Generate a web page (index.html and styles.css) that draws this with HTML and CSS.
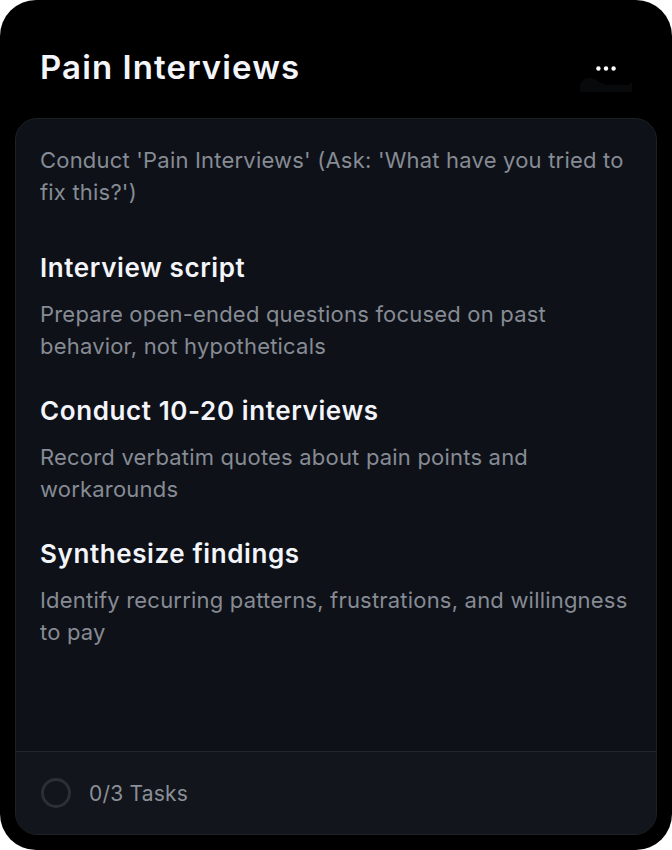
FILE: index.html
```html
<!DOCTYPE html>
<html>
<head>
<meta charset="utf-8">
<link rel="stylesheet" href="styles.css">
</head>
<body>
<div class="frame">
  <header class="header">
    <h1 class="title">Pain Interviews</h1>
    <button class="more" aria-label="More">
      <svg width="20" height="5" viewBox="0 0 20 5"><circle cx="2.4" cy="2.5" r="2.2" fill="#fff"/><circle cx="10" cy="2.5" r="2.2" fill="#fff"/><circle cx="17.6" cy="2.5" r="2.2" fill="#fff"/></svg>
      <svg class="ghost" width="52" height="14" viewBox="0 0 52 14"><path d="M0 14 L0 7 Q2 0 9 0 Q15 0 19 4 L26 7 L49 7 L52 4 L52 14 Z" fill="#08090a"/></svg>
    </button>
  </header>
  <section class="card">
    <div class="body">
      <p class="intro">Conduct 'Pain Interviews' (Ask: 'What have you tried to fix this?')</p>
      <div class="step">
        <h2 class="step-title">Interview script</h2>
        <p class="step-desc">Prepare open-ended questions focused on past behavior, not hypotheticals</p>
      </div>
      <div class="step">
        <h2 class="step-title">Conduct 10-20 interviews</h2>
        <p class="step-desc">Record verbatim quotes about pain points and workarounds</p>
      </div>
      <div class="step">
        <h2 class="step-title">Synthesize findings</h2>
        <p class="step-desc">Identify recurring patterns, frustrations, and willingness to pay</p>
      </div>
    </div>
    <footer class="footer">
      <span class="ring"></span>
      <span class="count">0/3 Tasks</span>
    </footer>
  </section>
</div>
</body>
</html>
```

FILE: styles.css
```css
* { box-sizing: border-box; }
html, body { margin: 0; padding: 0; background: #ffffff; }
body { font-family: Inter, "Open Sans", sans-serif; }
.frame {
  width: 672px;
  height: 850px;
  background: #000;
  border-radius: 36px;
  padding: 0 15px 15px;
  display: flex;
  flex-direction: column;
}
.header {
  height: 118px;
  display: flex;
  align-items: flex-start;
  justify-content: space-between;
  padding: 44px 41px 0 25px;
}
.title {
  margin: 0;
  font-size: 33px;
  line-height: 46px;
  font-weight: 600;
  letter-spacing: 1.1px;
  color: #f3f5fa;
}
.more {
  position: relative;
  background: none;
  border: 0;
  padding: 0;
  margin-top: 22px;
  width: 20px;
  height: 5px;
  display: flex;
}
.ghost {
  position: absolute;
  left: -16px;
  top: 12px;
}
.card {
  flex: 1;
  background: #0e1118;
  border: 1px solid #1d2027;
  border-radius: 22px;
  display: flex;
  flex-direction: column;
  overflow: hidden;
}
.body {
  flex: 1;
  padding: 25px 16px 0 24px;
}
.intro, .step-desc {
  margin: 0;
  font-size: 22px;
  line-height: 32px;
  letter-spacing: 0.2px;
  color: #868b94;
}
.step { margin-top: 32px; }
.intro + .step { margin-top: 43px; }
.step-title {
  margin: 0 0 13px;
  font-size: 26px;
  line-height: 34px;
  font-weight: 600;
  letter-spacing: 0.6px;
  color: #f3f5fa;
}
.footer {
  height: 83px;
  border-top: 1px solid #22252c;
  background: #12151b;
  display: flex;
  align-items: center;
  padding: 0 0 0 25px;
  gap: 18px;
}
.ring {
  width: 30px;
  height: 30px;
  border-radius: 50%;
  border: 3px solid #2b2f36;
}
.count {
  font-size: 21px;
  letter-spacing: 0.2px;
  color: #8a8f98;
}
```
